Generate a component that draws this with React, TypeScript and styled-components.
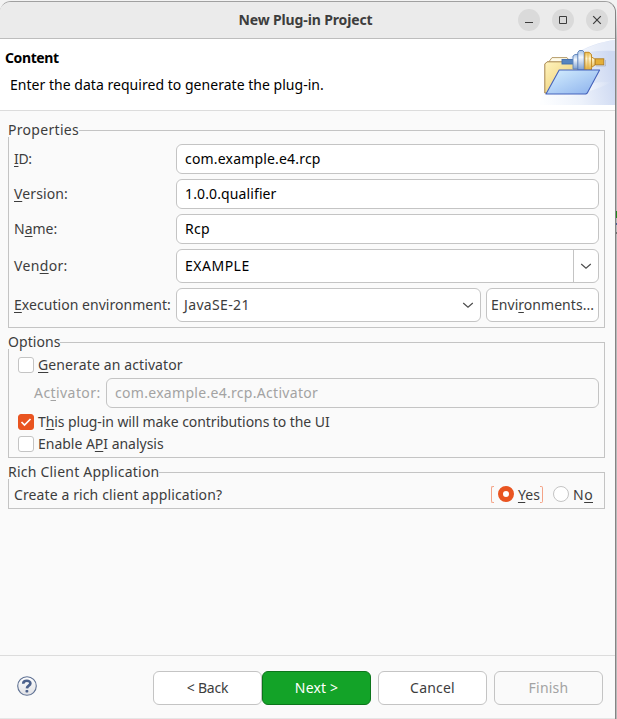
import React from 'react';
import styled, { createGlobalStyle, css } from 'styled-components';

const GlobalStyle = createGlobalStyle`
  * { box-sizing: border-box; }
  body {
    margin: 0;
    background: #b9b9b9;
    font: 14px/20px "Noto Sans", "Open Sans", sans-serif;
    color: #3d3d3d;
    overflow: hidden;
  }
  input, button { font: inherit; color: inherit; }
`;

const line = '#c4c4c4';

const Desktop = styled.div`
  height: 719px;
  padding-top: 1px;
  background: linear-gradient(
    to bottom,
    #f3f3f3 0 8px, #b9b9b9 40px 211px,
    #1f8a1f 211px 218px, #b9b9b9 218px 223px,
    #4a5f94 223px 225px, #b9b9b9 225px 232px,
    #707070 232px 234px, #b9b9b9 234px
  );
`;

const Window = styled.div`
  display: flex;
  flex-direction: column;
  width: 616px;
  height: 718px;
  background: #fafafa;
  border-top: 1px solid #a0a0a0;
  border-right: 1px solid #858585;
  border-radius: 11px 11px 0 0;
  overflow: hidden;
`;

const TitleBar = styled.header`
  display: grid;
  grid-template-columns: 1fr auto 1fr;
  align-items: center;
  height: 37px;
  padding: 0 7px 0 0;
  background: #ebebeb;
  border-bottom: 1px solid #bdbdbd;
`;

const Title = styled.h1`
  grid-column: 2;
  margin: 0 0 0 3px;
  font-size: 14px;
  line-height: 20px;
  font-weight: 700;
  letter-spacing: -0.13px;
`;

const WindowControls = styled.div`
  display: flex;
  justify-content: flex-end;
  gap: 12px;
`;

const ControlButton = styled.button`
  display: grid;
  place-items: center;
  width: 22px;
  height: 22px;
  padding: 0;
  border: 0;
  border-radius: 50%;
  background: #dadada;
`;

const Banner = styled.div`
  display: flex;
  justify-content: space-between;
  flex: none;
  height: 72px;
  background: #fff;
  border-bottom: 1px solid #dcdcdc;
  color: #000;
`;

const BannerText = styled.div`
  padding: 9px 0 0 5px;
`;

const BannerTitle = styled.h2`
  margin: 0;
  font-size: 14px;
  line-height: 20px;
  font-weight: 700;
  letter-spacing: -0.4px;
`;

const BannerMessage = styled.p`
  margin: 7px 0 0 5px;
  letter-spacing: 0.03px;
`;

const Body = styled.main`
  display: flex;
  flex-direction: column;
  gap: 8px;
  flex: 1;
  padding: 13px 10px 0 8px;
`;

const Group = styled.fieldset<{ $height: number }>`
  display: block;
  min-width: 0;
  height: ${(p) => p.$height}px;
  margin: 0;
  padding: 0;
  border: 1px solid ${line};
`;

const Legend = styled.legend<{ $track: number }>`
  height: 13px;
  margin-left: -1px;
  padding: 0;
  line-height: 12px;
  background: #fafafa;
  letter-spacing: ${(p) => p.$track}px;
`;

const PropertyGrid = styled.div`
  display: grid;
  grid-template-columns: 162px 1fr;
  grid-template-rows: 30px 30px 30px 34px 34px;
  row-gap: 5px;
  align-items: center;
  padding: 7px 5px 0;
`;

const Label = styled.label<{ $track?: number; $disabled?: boolean }>`
  white-space: nowrap;
  letter-spacing: ${(p) => p.$track ?? 0}px;
  color: ${(p) => (p.$disabled ? '#a3a3a3' : 'inherit')};
`;

const Mnemonic = styled.span`
  text-decoration: underline;
  text-decoration-thickness: 1px;
  text-underline-offset: 2px;
  text-decoration-skip-ink: none;
`;

const boxed = css`
  background: #fff;
  border: 1px solid ${line};
  border-radius: 6px;
`;

const TextField = styled.input<{ $track?: number }>`
  ${boxed}
  width: 100%;
  min-width: 0;
  height: 30px;
  padding: 0 8px 2px;
  color: #000;
  outline: 0;
  letter-spacing: ${(p) => p.$track ?? 0}px;

  &:disabled {
    background: #fafafa;
    color: #a3a3a3;
  }
`;

const Combo = styled.div`
  ${boxed}
  display: flex;
  height: 34px;
  color: #000;
`;

const ComboText = styled.span<{ $track: number }>`
  flex: 1;
  padding-left: 8px;
  line-height: 32px;
  letter-spacing: ${(p) => p.$track}px;
`;

const ComboArrow = styled.span`
  display: grid;
  place-items: center;
  width: 25px;
  border-left: 1px solid ${line};
`;

const EnvironmentRow = styled.div`
  display: grid;
  grid-template-columns: 305px 1fr;
  gap: 5px;
`;

const Select = styled.div`
  ${boxed}
  display: flex;
  align-items: center;
  justify-content: space-between;
  height: 34px;
  padding: 0 6px 0 7px;
  letter-spacing: 0.35px;
`;

const Button = styled.button<{ $width?: number; $track?: number; $primary?: boolean }>`
  ${boxed}
  width: ${(p) => (p.$width ? `${p.$width}px` : 'auto')};
  height: 34px;
  padding: 0;
  white-space: nowrap;
  letter-spacing: ${(p) => p.$track ?? 0}px;
  ${(p) => p.$primary && css`
    background: #13a328;
    border-color: #0c751b;
    color: #fff;
  `}

  &:disabled {
    background: #fafafa;
    color: #a3a3a3;
  }
`;

const OptionList = styled.div`
  display: flex;
  flex-direction: column;
  padding: 5px 5px 0 9px;
`;

const CheckRow = styled.label<{ $track: number; $height: number }>`
  display: flex;
  align-items: center;
  gap: 4px;
  height: ${(p) => p.$height}px;
  letter-spacing: ${(p) => p.$track}px;
`;

const CheckBox = styled.span<{ $checked?: boolean }>`
  display: grid;
  place-items: center;
  width: 16px;
  height: 16px;
  margin-top: -1px;
  border-radius: 3px;
  border: 1px solid ${(p) => (p.$checked ? '#e95420' : line)};
  background: ${(p) => (p.$checked ? '#e95420' : '#fff')};
`;

const ActivatorRow = styled.div`
  display: grid;
  grid-template-columns: 72px 1fr;
  align-items: center;
  height: 30px;
  margin-top: 2px;
  padding-left: 16px;
`;

const QuestionRow = styled.div`
  display: flex;
  align-items: center;
  height: 30px;
  padding: 1px 11px 0 5px;
`;

const Question = styled.span`
  flex: 1;
  letter-spacing: 0.11px;
`;

const RadioLabel = styled.label<{ $track: number }>`
  display: flex;
  align-items: center;
  gap: 4px;
  letter-spacing: ${(p) => p.$track}px;
`;

const Radio = styled.span<{ $checked?: boolean }>`
  width: 16px;
  height: 16px;
  margin-top: -1px;
  border-radius: 50%;
  background: #fff;
  border: ${(p) => (p.$checked ? '5.5px solid #e95420' : `1px solid ${line}`)};
`;

const FocusEdge = styled.span<{ $side: 'left' | 'right' }>`
  width: 3px;
  height: 17px;
  border: 1.5px solid #f4a387;
  ${(p) => (p.$side === 'left'
    ? 'border-right: 0; border-radius: 2px 0 0 2px; margin-right: 4px;'
    : 'border-left: 0; border-radius: 0 2px 2px 0; margin-right: 10px;')}
`;

const Footer = styled.footer`
  display: flex;
  align-items: center;
  height: 64px;
  padding: 1px 12px 0 16px;
  border-top: 1px solid #dcdcdc;
  border-bottom: 1px solid #e6e6e6;
`;

const ButtonPair = styled.div`
  display: flex;
  margin-left: auto;
  margin-right: 7px;
`;

const FinishButton = styled(Button)`
  margin-left: 7px;
`;

const HelpIcon = () => (
  <svg width="21" height="23" viewBox="0 0 21 23">
    <defs>
      <linearGradient id="help" x2="0" y2="1">
        <stop stopColor="#fff" />
        <stop offset="1" stopColor="#dfe0e4" />
      </linearGradient>
    </defs>
    <circle cx="11" cy="10" r="9.3" fill="url(#help)" stroke="#5f7193" strokeWidth="1.1" />
    <path d="M7.2 7.7C7.3 3.8 14.6 4 14.4 7.4C14.3 9.7 11 9.6 10.9 12.4" fill="none" stroke="#4c618b" strokeWidth="2.6" />
    <rect x="9.5" y="14" width="2.8" height="2.6" rx=".8" fill="#4c618b" />
  </svg>
);

const Chevron = () => (
  <svg width="12" height="8" viewBox="0 0 12 8">
    <path d="M1.2 2L6 6.2L10.8 2" fill="none" stroke="#4d4d4d" strokeWidth="1.2" />
  </svg>
);

const PluginFolder = () => (
  <svg width="75" height="66" viewBox="0 0 75 66">
    <defs>
      <linearGradient id="sky" x1="0" y1=".8" x2="1" y2=".6">
        <stop stopColor="#fdfeff" />
        <stop offset=".5" stopColor="#edf2fb" />
        <stop offset="1" stopColor="#ced9f2" />
      </linearGradient>
      <linearGradient id="streak" x1="0" y1="0" x2="1" y2="0">
        <stop stopColor="#fff" stopOpacity="0" />
        <stop offset=".6" stopColor="#fff" stopOpacity=".5" />
        <stop offset="1" stopColor="#fff" stopOpacity="0" />
      </linearGradient>
      <linearGradient id="folder" x2="1" y2="1">
        <stop stopColor="#fff3bd" />
        <stop offset="1" stopColor="#e8c665" />
      </linearGradient>
      <linearGradient id="front" x2="1" y2="1">
        <stop stopColor="#d7f0ff" />
        <stop offset="1" stopColor="#8ab0ec" />
      </linearGradient>
      <linearGradient id="steel" x2="0" y2="1">
        <stop stopColor="#a6c2e5" />
        <stop offset=".35" stopColor="#f2f8ff" />
        <stop offset="1" stopColor="#7d9fd0" />
      </linearGradient>
      <linearGradient id="gold" x2="0" y2="1">
        <stop stopColor="#edbd48" />
        <stop offset=".35" stopColor="#fff5cf" />
        <stop offset="1" stopColor="#e0ab36" />
      </linearGradient>
    </defs>
    <path d="M0 66C2 50 12 30 32 17C47 7 60 3 75 1V66Z" fill="url(#sky)" />
    <path d="M35 16C47 8 60 3 75 1V12C62 11 48 12 35 16Z" fill="#fff" opacity=".45" />
    <path d="M10 61C28 48 50 42 72 43C58 50 38 57 10 61Z" fill="url(#streak)" />
    <path d="M8 24L12 18.6H27L31 24Z" fill="#fffbe9" stroke="#b69c6b" />
    <path d="M4.8 54V25L7 22.8H33L39 30V54Z" fill="url(#folder)" stroke="#a5834c" />
    <rect x="22" y="20.5" width="11.5" height="4.5" fill="#5685c0" stroke="#3f6dae" strokeWidth=".9" />
    <path d="M33 17L35 15.5H38.5V30H33Z" fill="url(#steel)" stroke="#5f84bb" strokeWidth=".9" />
    <path d="M37.8 13.5L39.3 11.5H42.7L44.2 13.5V31H37.8Z" fill="url(#steel)" stroke="#5279b4" strokeWidth=".9" />
    <path d="M44.8 31V13.3H49L51.5 15.5V18L55.2 20.2V25.8L51.5 28.5V31Z" fill="url(#gold)" stroke="#be8218" strokeWidth=".9" />
    <path d="M48 14V31" stroke="#e2ae44" strokeWidth=".8" />
    <path d="M51.5 18V28" stroke="#be8218" strokeWidth=".8" />
    <path d="M56 27H65.5V21" fill="none" stroke="#8a93a8" opacity=".4" />
    <rect x="55.2" y="19.8" width="8.6" height="6" fill="#e4af38" stroke="#b07d22" strokeWidth=".9" />
    <path d="M19.2 31H59.6L47.3 54L45.8 55H6Z" fill="url(#front)" stroke="#4562bb" strokeWidth="1.1" strokeLinejoin="round" />
  </svg>
);

export default function App() {
  return (
    <>
      <GlobalStyle />
      <Desktop>
        <Window>
          <TitleBar>
            <Title>New Plug-in Project</Title>
            <WindowControls>
              <ControlButton aria-label="Minimize">
                <svg width="10" height="10"><path d="M1 7.5h8" stroke="#3d3d3d" /></svg>
              </ControlButton>
              <ControlButton aria-label="Maximize">
                <svg width="10" height="10"><path d="M1.5 1.5h7v7h-7z" fill="none" stroke="#3d3d3d" /></svg>
              </ControlButton>
              <ControlButton aria-label="Close">
                <svg width="10" height="10"><path d="M1.2 1.2l7.6 7.6M8.8 1.2L1.2 8.8" stroke="#3d3d3d" strokeWidth="1.2" /></svg>
              </ControlButton>
            </WindowControls>
          </TitleBar>
          <Banner>
            <BannerText>
              <BannerTitle>Content</BannerTitle>
              <BannerMessage>Enter the data required to generate the plug-in.</BannerMessage>
            </BannerText>
            <PluginFolder />
          </Banner>
          <Body>
            <Group $height={204}>
              <Legend $track={0.3}>Properties</Legend>
              <PropertyGrid>
                <Label $track={-0.3}><Mnemonic>I</Mnemonic>D:</Label>
                <TextField defaultValue="com.example.e4.rcp" $track={0.18} />
                <Label $track={0.11}><Mnemonic>V</Mnemonic>ersion:</Label>
                <TextField defaultValue="1.0.0.qualifier" $track={0.12} />
                <Label>N<Mnemonic>a</Mnemonic>me:</Label>
                <TextField defaultValue="Rcp" $track={0.3} />
                <Label $track={0.33}>Ven<Mnemonic>d</Mnemonic>or:</Label>
                <Combo>
                  <ComboText $track={0.5}>EXAMPLE</ComboText>
                  <ComboArrow><Chevron /></ComboArrow>
                </Combo>
                <Label $track={0.04}><Mnemonic>E</Mnemonic>xecution environment:</Label>
                <EnvironmentRow>
                  <Select>JavaSE-21<Chevron /></Select>
                  <Button $track={0.04}>Envi<Mnemonic>r</Mnemonic>onments...</Button>
                </EnvironmentRow>
              </PropertyGrid>
            </Group>
            <Group $height={122}>
              <Legend $track={0.06}>Options</Legend>
              <OptionList>
                <CheckRow $track={0.12} $height={22}>
                  <CheckBox /><span><Mnemonic>G</Mnemonic>enerate an activator</span>
                </CheckRow>
                <ActivatorRow>
                  <Label $disabled $track={0.43}>Ac<Mnemonic>t</Mnemonic>ivator:</Label>
                  <TextField disabled defaultValue="com.example.e4.rcp.Activator" $track={0.3} />
                </ActivatorRow>
                <CheckRow $track={-0.07} $height={28}>
                  <CheckBox $checked>
                    <svg width="12" height="10"><path d="M1.5 5l3 3L10.5 2" fill="none" stroke="#fff" strokeWidth="1.7" /></svg>
                  </CheckBox>
                  <span>T<Mnemonic>h</Mnemonic>is plug-in will make contributions to the UI</span>
                </CheckRow>
                <CheckRow $track={-0.02} $height={16}>
                  <CheckBox /><span>Enable A<Mnemonic>P</Mnemonic>I analysis</span>
                </CheckRow>
              </OptionList>
            </Group>
            <Group $height={43}>
              <Legend $track={0.22}>Rich Client Application</Legend>
              <QuestionRow>
                <Question>Create a rich client application?</Question>
                <FocusEdge $side="left" />
                <RadioLabel $track={0.1}><Radio $checked /><span><Mnemonic>Y</Mnemonic>es</span></RadioLabel>
                <FocusEdge $side="right" />
                <RadioLabel $track={0.4}><Radio /><span>N<Mnemonic>o</Mnemonic></span></RadioLabel>
              </QuestionRow>
            </Group>
          </Body>
          <Footer>
            <HelpIcon />
            <ButtonPair>
              <Button $width={109} $track={-0.2}>&lt; Back</Button>
              <Button $width={109} $track={0.15} $primary>Next &gt;</Button>
            </ButtonPair>
            <Button $width={109} $track={0.2}>Cancel</Button>
            <FinishButton $width={109} $track={0.22} disabled>Finish</FinishButton>
          </Footer>
        </Window>
      </Desktop>
    </>
  );
}
